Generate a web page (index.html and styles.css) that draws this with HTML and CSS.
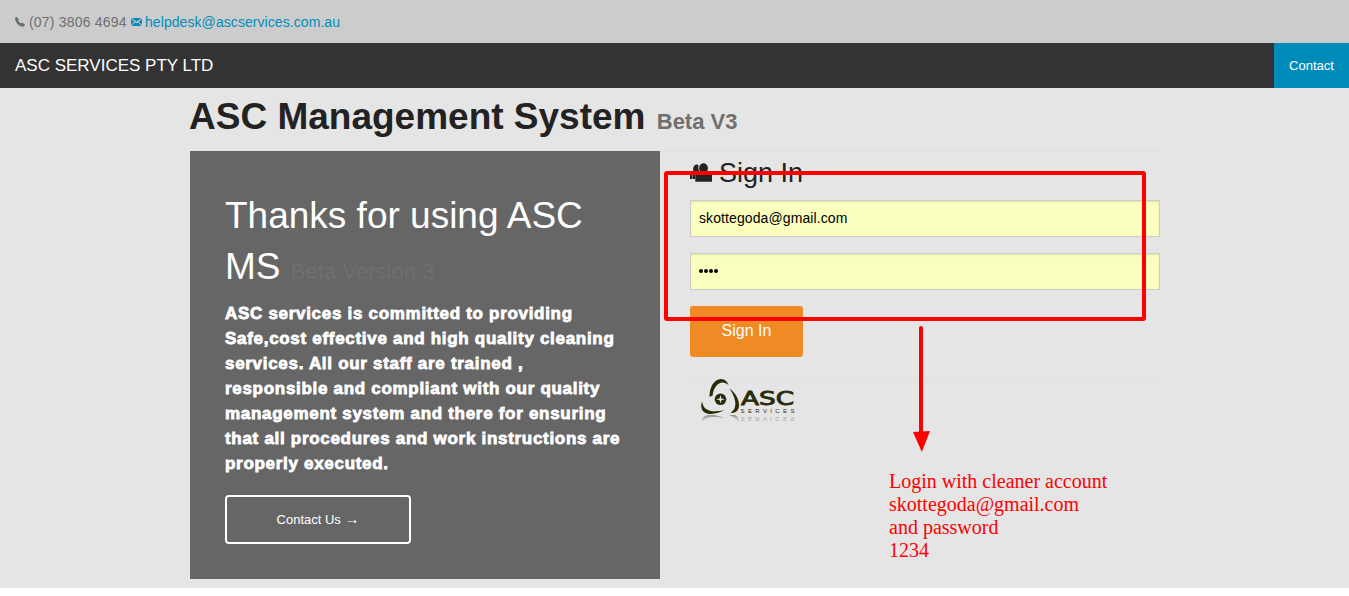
FILE: index.html
```
<!DOCTYPE html>
<html lang="en">
<head>
<meta charset="utf-8">
<title>ASC Management System</title>
<link rel="stylesheet" href="styles.css">
</head>
<body>
<div class="page">
  <div class="contact-bar">
    <svg class="icon-phone" viewBox="0 0 10 10"><path d="M0 1.2C.2.4 1.2-.1 1.8.1L3.9 2.6Q3.9 3.2 3.3 3.7Q4.2 5.3 6 6.3Q6.8 5.7 7.4 5.8L9.9 7.6Q10 9 8.5 9.6Q6.7 10 4.2 8.4Q.2 5.6 0 1.2Z"/></svg>
    <span class="phone">(07) 3806 4694</span>
    <svg class="icon-mail" viewBox="0 0 11 8"><path d="M.4 0H10.6L5.5 3.8ZM0 .7L3.4 3.7L0 7ZM11 .7V7L7.6 3.7ZM.5 8L4 4.2L5.5 5.2L7 4.2L10.5 8Z"/></svg>
    <a class="mail">helpdesk@ascservices.com.au</a>
  </div>
  <nav class="nav">
    <span class="brand">ASC SERVICES PTY LTD</span>
    <a class="nav-contact">Contact</a>
  </nav>
  <main class="main">
    <h1 class="title"><span class="title-main">ASC Management System</span> <small class="title-small">Beta V3</small></h1>
    <div class="columns">
      <section class="panel">
        <h2 class="thanks">Thanks for using ASC<br>MS <small class="thanks-small">Beta Version 3</small></h2>
        <p class="blurb">ASC services is committed to providing<br>Safe,cost effective and high quality cleaning<br>services. All our staff are trained ,<br>responsible and compliant with our quality<br>management system and there for ensuring<br>that all procedures and work instructions are<br>properly executed.</p>
        <a class="contact-button">Contact Us <span class="arrow">→</span></a>
      </section>
      <section class="signin">
        <h3 class="signin-title">
          <svg class="icon-users" viewBox="0 0 23 20"><path d="M0 10H2.5V16H0ZM3.2 7.5C2.8 3.8 4.3 1.8 6.5 1.5Q8 1.4 8.6 2.2Q7.7 5 9 8L8 9H5V16H3V10Z"/><ellipse cx="13.5" cy="5.2" rx="4.4" ry="5"/><path d="M5.3 18.8V11.5Q5.3 10 7.3 9.7L10 9.2Q13.4 12.6 17 9.2L20.3 9.7Q22 10 22 11.5V18.8Z"/></svg>
          <span class="signin-text">Sign In</span>
        </h3>
        <div class="field">skottegoda@gmail.com</div>
        <div class="field"><span class="dots"><i class="dot"></i><i class="dot"></i><i class="dot"></i><i class="dot"></i></span></div>
        <a class="signin-button">Sign In</a>
        <div class="logo-row">
          <svg class="logo" viewBox="0 0 115 60">
            <defs>
              <linearGradient id="fade" x1="0" y1="0" x2="0" y2="1"><stop offset="0" stop-color="#777" stop-opacity=".8"/><stop offset="1" stop-color="#999" stop-opacity="0"/></linearGradient>
            </defs>
            <g fill="#2b2b0c">
              <path d="M19.5 27C19.5 17 24 9.2 31 9C35 9 37.5 12 38.5 15C35 11.5 30 11.5 27 15C24 18 23 22 22.6 25.5Z"/>
              <path d="M12 31.5C10.5 36 11.3 40.5 15 42.7C21 45.5 29 43 34.5 40.3C28 41.5 21 42 17 39.5C13.5 37.5 13 35 12 31.5Z"/>
              <path d="M39.5 18.5C45 22.5 49.5 29 49 36C48.6 40.5 45.5 43.2 40.5 43C44.8 40 46 36 45 30.5C44 26 42 22 39.5 18.5Z"/>
              <circle cx="30.5" cy="29.3" r="5.8"/>
              <text class="logo-name" x="51" y="35.4" textLength="53" lengthAdjust="spacingAndGlyphs">ASC</text>
              <text class="logo-sub" x="50.5" y="43" textLength="54">SERVICES</text>
            </g>
            <path d="M30.5 25L31.4 28.4L34.8 29.3L31.4 30.2L30.5 33.6L29.6 30.2L26.2 29.3L29.6 28.4Z" fill="#e5e5e5"/>
            <path d="M11.5 53C11 47 15 45 20 45C27 45 32 47 34.5 48C26 46.5 20 46.5 17 48C14 49 13 51 11.5 53ZM39 45H45Q49.5 47 49 53Q46 47.5 39 45Z" fill="url(#fade)"/>
            <g transform="translate(0 90) scale(1 -1)" opacity=".3"><text class="logo-sub" x="50.5" y="43.5" textLength="54">SERVICES</text></g>
          </svg>
        </div>
      </section>
    </div>
  </main>
  <svg class="markup" viewBox="0 0 1349 596">
    <rect x="666" y="173" width="478" height="146" rx="1" fill="none" stroke="#f00" stroke-width="4"/>
    <path d="M921 328V434" stroke="#f00" stroke-width="4" stroke-linecap="round"/>
    <path d="M913 432L930 431L921.8 452Z" fill="#f00"/>
  </svg>
  <div class="note">Login with cleaner account<br>skottegoda@gmail.com<br>and password<br>1234</div>
</div>
</body>
</html>
```

FILE: styles.css
```
* { box-sizing: border-box; }
body { margin: 0; background: #fff; font-family: "Liberation Sans", Arial, sans-serif; color: #222; overflow: hidden; }
h1, h2, h3, p { margin: 0; font-weight: normal; }
.page { position: relative; height: 596px; white-space: nowrap; }
.contact-bar { height: 43px; background: #ccc; display: flex; align-items: center; padding-left: 15px; font-size: 14px; color: #6f6f6f; }
.icon-phone { width: 10px; height: 10px; fill: #6f6f6f; margin-right: 4px; }
.phone { width: 98px; margin-right: 4px; letter-spacing: .2px; }
.icon-mail { width: 11px; height: 8px; fill: #008cba; margin-right: 3px; }
.mail { color: #008cba; letter-spacing: .07px; }
.nav { height: 45px; background: #333; color: #fff; display: flex; justify-content: space-between; align-items: center; padding-left: 15px; }
.brand { font-size: 17px; }
.nav-contact { width: 75px; height: 45px; line-height: 45px; background: #008cba; text-align: center; font-size: 13px; }
.main { height: 500px; background: #e5e5e5; padding-left: 190px; }
.title { height: 63px; margin-left: -1px; line-height: 58px; font-size: 37px; font-weight: bold; }
.title-small { font-size: 22px; color: #6f6f6f; margin-left: 1px; }
.columns { display: flex; width: 970px; }
.panel { width: 470px; height: 428px; background: #666; color: #fff; padding: 39px 35px 0; }
.thanks { font-size: 37px; line-height: 51px; }
.thanks-small { font-size: 22px; color: #6f6f6f; letter-spacing: .05px; }
.blurb { margin-top: 4px; font-size: 17px; line-height: 25px; font-weight: bold; letter-spacing: .7px; -webkit-text-stroke: .8px #fff; }
.contact-button { display: block; margin-top: 19px; width: 186px; height: 49px; border: 2px solid #fff; border-radius: 4px; line-height: 45px; font-size: 13px; text-align: center; }
.arrow { font-size: 15px; line-height: 1; }
.signin { width: 500px; padding-left: 30px; border-top: 1px solid #e0e0e0; }
.signin-title { display: flex; height: 48px; padding-top: 1px; font-size: 27px; line-height: 40px; }
.icon-users { width: 23px; height: 20px; margin: 10px 6px 0 0; fill: #222; }
.field { width: 470px; height: 37px; margin-bottom: 16px; padding-left: 8px; border: 1px solid #ccc; background: #faffbd; box-shadow: inset 0 1px 2px rgba(0,0,0,.1); font-size: 14px; letter-spacing: .1px; line-height: 34px; color: #000; }
.dots { display: flex; gap: 1px; padding-top: 15px; }
.dot { width: 4px; height: 4px; border-radius: 50%; background: #000; }
.signin-button { display: block; width: 113px; height: 51px; border-radius: 3px; background: #f08a24; color: #fff; font-size: 16px; line-height: 49px; text-align: center; }
.logo-row { margin-top: 20px; border-top: 1px solid #e0e0e0; }
.logo { display: block; width: 115px; height: 60px; margin-top: -8px; }
.logo-name { font: 20px "DejaVu Sans", sans-serif; stroke: #2b2b0c; stroke-width: .9px; }
.logo-sub { font: 6px "Liberation Sans", sans-serif; }
.markup { position: absolute; left: 0; top: 0; width: 1349px; height: 596px; }
.note { position: absolute; left: 889px; top: 470px; font: 20px/23px "Liberation Serif", serif; color: #f00; }
```
